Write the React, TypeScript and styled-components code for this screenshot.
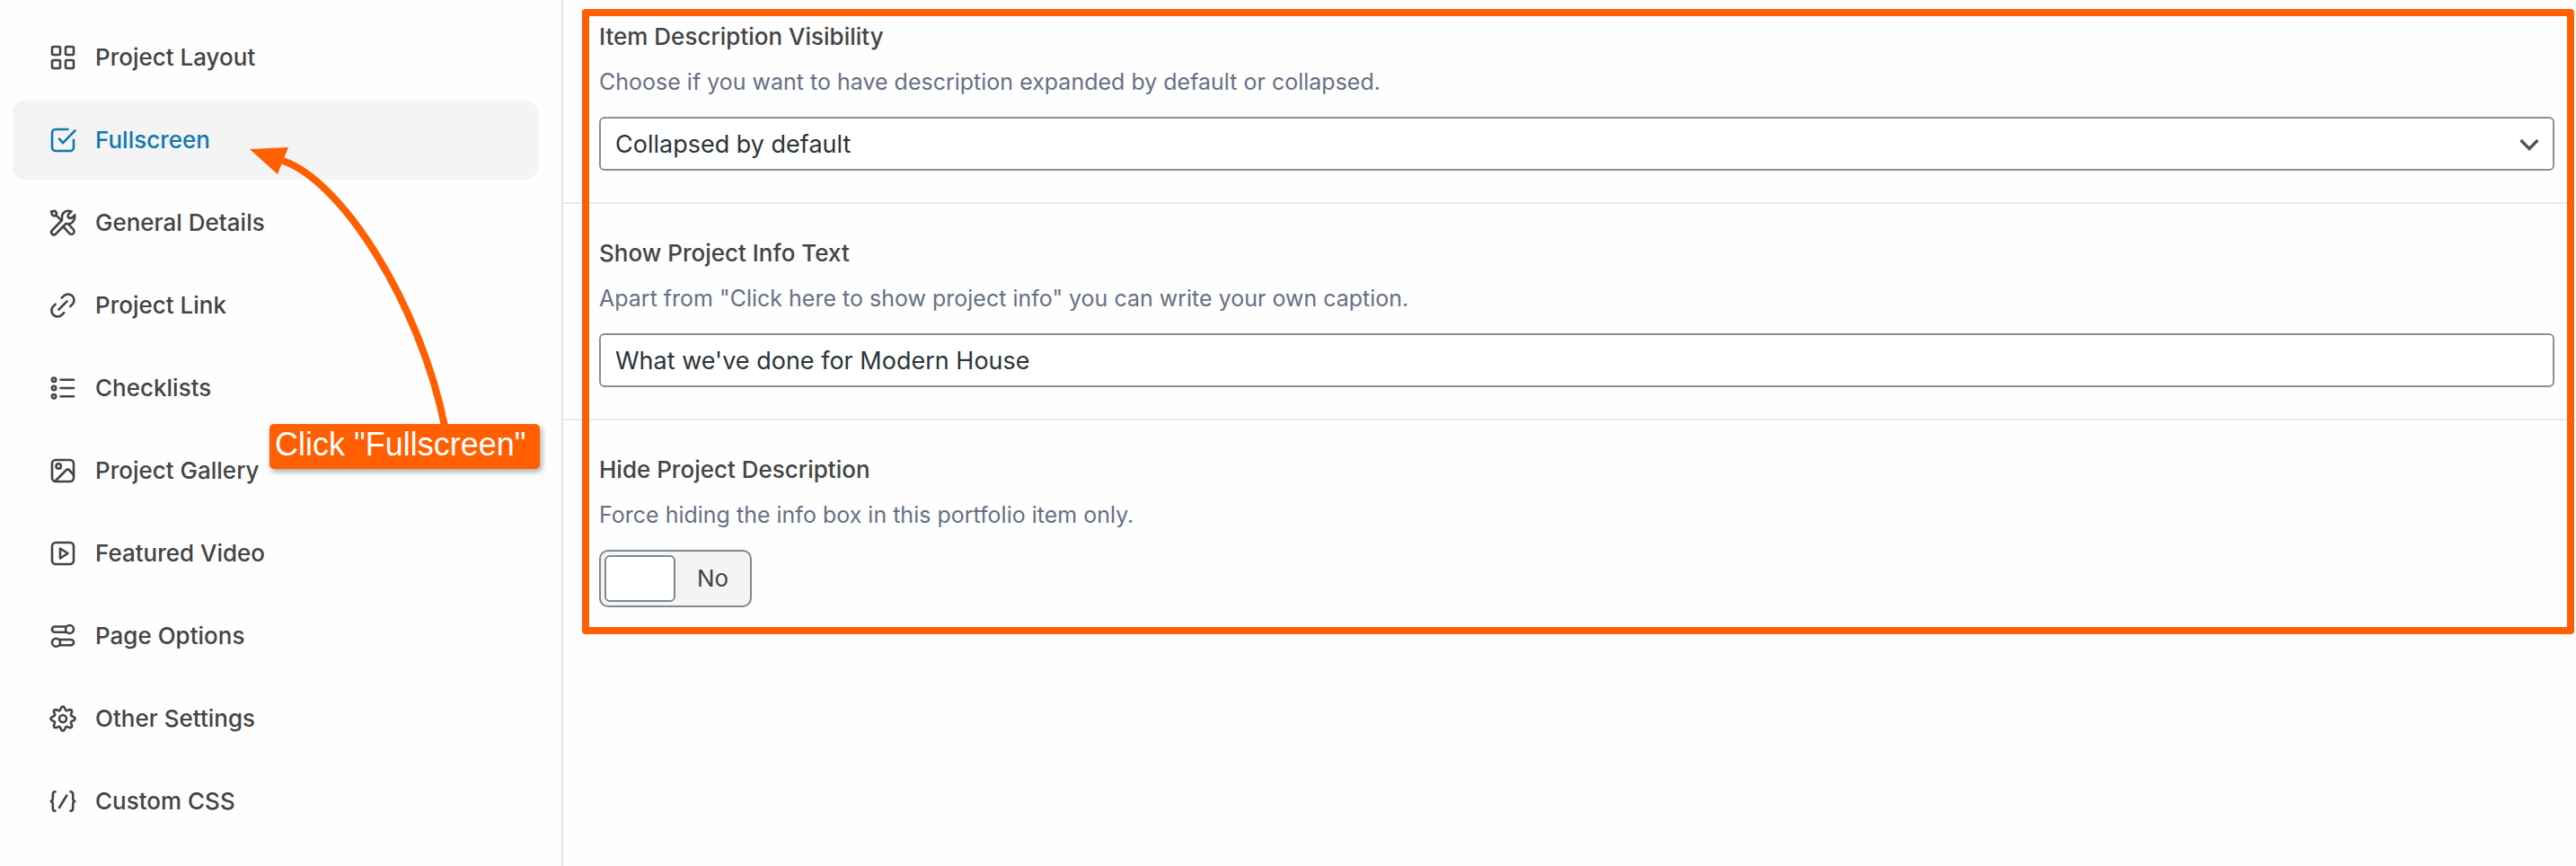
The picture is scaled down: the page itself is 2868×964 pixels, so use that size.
import React from "react";
import styled, { createGlobalStyle } from "styled-components";

const GlobalStyle = createGlobalStyle`
  *, *::before, *::after { box-sizing: border-box; }
  body { margin: 0; background: #fefefe; }
  body, input, select, label { font-family: Inter, "Liberation Sans", sans-serif; }
`;

const Page = styled.div`
  position: relative;
  display: flex;
  align-items: stretch;
  min-height: 100vh;
`;

const Sidebar = styled.nav`
  flex: 0 0 627px;
  padding: 20px 26px 20px 14px;
  border-right: 2px solid #e2e4e7;
`;

const TabList = styled.ul`
  display: flex;
  flex-direction: column;
  gap: 4px;
  margin: 0;
  padding: 0;
  list-style: none;
`;

const Tab = styled.a<{ $active?: boolean }>`
  display: flex;
  align-items: center;
  gap: 20px;
  height: 88px;
  padding: 0 40px;
  border-radius: 14px;
  background: ${(p) => (p.$active ? "#f4f4f4" : "transparent")};
  color: ${(p) => (p.$active ? "#1078b0" : "#444444")};
  font-size: 26px;
  font-weight: 500;
  line-height: 30px;
  text-decoration: none;
`;

const IconBox = styled.svg`
  flex: none;
  width: 32px;
  height: 32px;
  fill: none;
  stroke: currentColor;
  stroke-width: 2.6;
  stroke-linecap: round;
  stroke-linejoin: round;
`;

const Content = styled.main`
  flex: 1;
  min-width: 0;
`;

const Fields = styled.form`
  position: relative;
`;

const Field = styled.div`
  display: flex;
  flex-direction: column;
  align-items: flex-start;
  padding: 40px 24px 35px 40px;

  &:first-child { padding-top: 26px; }
  & + & { border-top: 2px solid #e8eaed; }
`;

const FieldLabel = styled.label`
  color: #444444;
  font-size: 26px;
  font-weight: 500;
  line-height: 30px;
`;

const Hint = styled.p`
  margin: 20px 0 24px;
  color: #667085;
  font-size: 25px;
  line-height: 30px;
`;

const SelectWrap = styled.div`
  position: relative;
  width: 100%;
`;

const Select = styled.select`
  display: block;
  width: 100%;
  height: 60px;
  padding: 0 64px 0 16px;
  border: 2px solid #8c8f94;
  border-radius: 6px;
  background: #ffffff;
  color: #2c3338;
  font-size: 27px;
  appearance: none;
`;

const Chevron = styled.svg`
  position: absolute;
  top: 18px;
  right: 16px;
  width: 24px;
  height: 24px;
  fill: none;
  stroke: #555555;
  stroke-width: 3.4;
  pointer-events: none;
`;

const TextInput = styled.input`
  width: 100%;
  height: 60px;
  padding: 0 16px;
  border: 2px solid #8c8f94;
  border-radius: 6px;
  background: #ffffff;
  color: #2c3338;
  font-size: 27px;
`;

const Switch = styled.label`
  display: flex;
  align-items: center;
  gap: 24px;
  height: 64px;
  padding: 0 24px 0 4px;
  border: 2px solid #7e8993;
  border-radius: 10px;
  background: #f4f4f4;
  color: #444444;
  font-size: 26px;
  line-height: 30px;
`;

const SwitchKnob = styled.input`
  width: 79px;
  height: 52px;
  margin: 0;
  border: 2px solid #7e8993;
  border-radius: 6px;
  background: #ffffff;
  appearance: none;
`;

const Highlight = styled.div`
  position: absolute;
  top: 10px;
  right: 2px;
  bottom: 5px;
  left: 21px;
  border: 8px solid #ff5f00;
  border-radius: 4px;
  pointer-events: none;
`;

const Arrow = styled.svg`
  position: absolute;
  top: 150px;
  left: 270px;
  width: 240px;
  height: 330px;
  pointer-events: none;
`;

const Callout = styled.div`
  position: absolute;
  top: 472px;
  left: 300px;
  width: 301px;
  height: 50px;
  padding: 0 6px;
  border-radius: 5px;
  background: #ff5f00;
  box-shadow: 2px 3px 6px rgba(0, 0, 0, 0.35);
  color: #ffffff;
  font-family: "Liberation Sans", sans-serif;
  font-size: 36px;
  line-height: 46px;
  white-space: nowrap;
`;

/* Outline of an eight-lobed cog centred in a 32-unit box. */
const cogOutline =
  "M" +
  Array.from({ length: 128 }, (_, i) => {
    const angle = (i / 128) * 2 * Math.PI;
    const radius = 11.6 + 1.9 * Math.cos(8 * angle);
    return `${(16 + radius * Math.sin(angle)).toFixed(2)} ${(16 - radius * Math.cos(angle)).toFixed(2)}`;
  }).join("L") +
  "z";

const icons = {
  layout: (
    <>
      <rect x="4" y="4" width="9" height="9" rx="1.5" />
      <rect x="19" y="4" width="9" height="9" rx="1.5" />
      <rect x="4" y="19" width="9" height="9" rx="1.5" />
      <rect x="19" y="19" width="9" height="9" rx="1.5" />
    </>
  ),
  check: (
    <>
      <path d="M21.5 4H8a4 4 0 0 0-4 4v16a4 4 0 0 0 4 4h16a4 4 0 0 0 4-4v-8.3" />
      <path d="M12 14.6l4 4.6L29.5 5.3" />
    </>
  ),
  tools: (
    <>
      <path d="M3.2 3.4l4-.6 1.8 2-.6 3-2 .6-2.600-1.600z" />
      <path d="M8.4 7.6L14.4 13.4" />
      <path d="M25.6 3.4c-5-2-10.600.8-10.600 6.200v3.400L4 24.500a2.800 2.800 0 0 0 4 4L19.400 17c5.600 1.400 10.400-2.600 9.800-9.600l-3.200 3.200h-3.400l-1-1.400.4-2.600z" />
      <path d="M17 21l6.400 6.800a3 3 0 0 0 4.300-4.300L22 17.200" />
    </>
  ),
  link: (
    <>
      <path d="M14.7 7.7L17 5.4a6.7 6.7 0 0 1 9.5 9.5l-2.3 2.3" />
      <path d="M7.700 14.700L5.400 17a6.700 6.700 0 0 0 9.500 9.500l2.300-2.300" />
      <path d="M11.400 20.500l9.200-9.200" />
    </>
  ),
  list: (
    <>
      <circle cx="6" cy="6.7" r="2.2" />
      <circle cx="6" cy="16" r="2.2" />
      <circle cx="6" cy="25.3" r="2.2" />
      <path d="M13.5 6.7H28M13.5 16H28M13.5 25.3H28" />
    </>
  ),
  image: (
    <>
      <rect x="4" y="4" width="24" height="24" rx="4" />
      <circle cx="11.2" cy="11" r="2.7" />
      <path d="M7.500 27.500L20 15a2 2 0 0 1 2.800 0l5.200 5.500" />
    </>
  ),
  video: (
    <>
      <rect x="4" y="4" width="24" height="24" rx="4" />
      <path d="M13 10.500v11l8.500-5.500z" />
    </>
  ),
  toggles: (
    <>
      <path d="M19.500 5.500H7a3 3 0 0 0 0 6.200h12.500" />
      <circle cx="23.5" cy="8.5" r="4.5" />
      <path d="M12.500 20H25a3 3 0 0 1 0 6.200H12.500" />
      <circle cx="8.5" cy="23.2" r="4.5" />
    </>
  ),
  gear: (
    <>
      <circle cx="16" cy="16" r="4" />
      <path d={cogOutline} />
    </>
  ),
  code: (
    <>
      <path d="M7.500 5.200C5 5.200 4.800 6.500 4.800 8.500v4.500c0 1.500-.5 2.500-2 3 1.500.5 2 1.500 2 3v4.500c0 2 .2 3.300 2.700 3.300" />
      <path d="M24.500 5.200c2.500 0 2.700 1.300 2.700 3.300v4.500c0 1.500.5 2.500 2 3-1.500.5-2 1.500-2 3v4.500c0 2-.2 3.300-2.700 3.300" />
      <path d="M20.300 9.500l-8.300 13.500" />
    </>
  ),
};

const tabs: { label: string; icon: keyof typeof icons; active?: boolean }[] = [
  { label: "Project Layout", icon: "layout" },
  { label: "Fullscreen", icon: "check", active: true },
  { label: "General Details", icon: "tools" },
  { label: "Project Link", icon: "link" },
  { label: "Checklists", icon: "list" },
  { label: "Project Gallery", icon: "image" },
  { label: "Featured Video", icon: "video" },
  { label: "Page Options", icon: "toggles" },
  { label: "Other Settings", icon: "gear" },
  { label: "Custom CSS", icon: "code" },
];

export default function App() {
  return (
    <>
      <GlobalStyle />
      <Page>
        <Sidebar>
          <TabList>
            {tabs.map((tab) => (
              <li key={tab.label}>
                <Tab href="#" $active={tab.active} aria-current={tab.active ? "page" : undefined}>
                  <IconBox viewBox="0 0 32 32" aria-hidden="true">{icons[tab.icon]}</IconBox>
                  {tab.label}
                </Tab>
              </li>
            ))}
          </TabList>
        </Sidebar>
        <Content>
          <Fields>
            <Field>
              <FieldLabel htmlFor="visibility">Item Description Visibility</FieldLabel>
              <Hint>Choose if you want to have description expanded by default or collapsed.</Hint>
              <SelectWrap>
                <Select id="visibility" defaultValue="collapsed">
                  <option value="collapsed">Collapsed by default</option>
                  <option value="expanded">Expanded by default</option>
                </Select>
                <Chevron viewBox="0 0 24 24" aria-hidden="true">
                  <path d="M2.5 8l9.5 9.5L21.5 8" />
                </Chevron>
              </SelectWrap>
            </Field>
            <Field>
              <FieldLabel htmlFor="caption">Show Project Info Text</FieldLabel>
              <Hint>Apart from "Click here to show project info" you can write your own caption.</Hint>
              <TextInput id="caption" type="text" defaultValue="What we've done for Modern House" />
            </Field>
            <Field>
              <FieldLabel htmlFor="hide">Hide Project Description</FieldLabel>
              <Hint>Force hiding the info box in this portfolio item only.</Hint>
              <Switch>
                <SwitchKnob id="hide" type="checkbox" />
                No
              </Switch>
            </Field>
            <Highlight />
          </Fields>
        </Content>
        <Arrow viewBox="0 0 240 330" aria-hidden="true">
          <path d="M45 29C112 52 198 190 225 324" fill="none" stroke="#ff5f00" strokeWidth="8" />
          <path d="M8 16L51 14L39 44z" fill="#ff5f00" />
        </Arrow>
        <Callout>Click "Fullscreen"</Callout>
      </Page>
    </>
  );
}
